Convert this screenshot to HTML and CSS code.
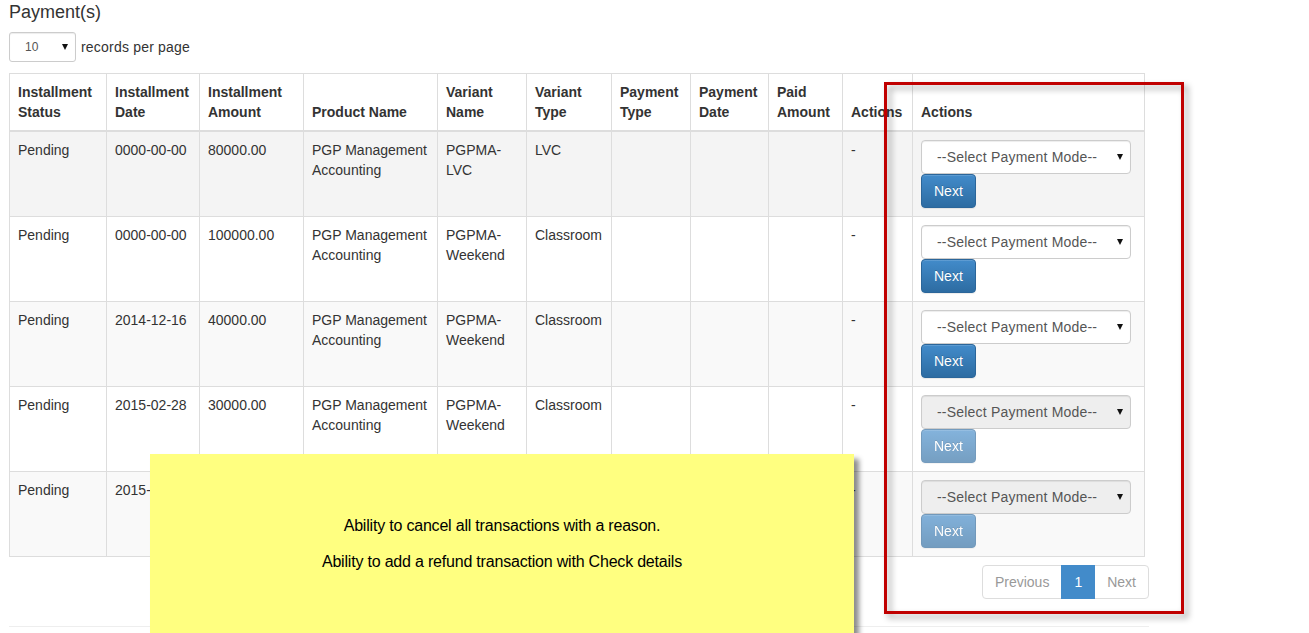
FILE: index.html
```html
<!DOCTYPE html>
<html>
<head>
<meta charset="utf-8">
<title>Payment(s)</title>
<link rel="stylesheet" href="styles.css">
</head>
<body>
<div class="page">
  <h4 class="title">Payment(s)</h4>
  <div class="length">
    <span class="sel-sm"><select><option>10</option></select></span>
    <span>records per page</span>
  </div>
  <table class="grid">
    <colgroup>
      <col class="c1"><col class="c2"><col class="c3"><col class="c4"><col class="c5"><col class="c6"><col class="c7"><col class="c8"><col class="c9"><col class="c10"><col class="c11">
    </colgroup>
    <thead>
      <tr>
        <th>Installment Status</th>
        <th>Installment Date</th>
        <th>Installment Amount</th>
        <th>Product Name</th>
        <th>Variant Name</th>
        <th>Variant Type</th>
        <th>Payment Type</th>
        <th>Payment Date</th>
        <th>Paid Amount</th>
        <th>Actions</th>
        <th>Actions</th>
      </tr>
    </thead>
    <tbody>
      <tr class="hover">
        <td>Pending</td><td>0000-00-00</td><td>80000.00</td><td>PGP Management Accounting</td><td>PGPMA-LVC</td><td>LVC</td><td></td><td></td><td></td><td>-</td>
        <td><span class="mode"><select><option>--Select Payment Mode--</option></select></span><button class="btn-next">Next</button></td>
      </tr>
      <tr>
        <td>Pending</td><td>0000-00-00</td><td>100000.00</td><td>PGP Management Accounting</td><td>PGPMA-Weekend</td><td>Classroom</td><td></td><td></td><td></td><td>-</td>
        <td><span class="mode"><select><option>--Select Payment Mode--</option></select></span><button class="btn-next">Next</button></td>
      </tr>
      <tr class="odd">
        <td>Pending</td><td>2014-12-16</td><td>40000.00</td><td>PGP Management Accounting</td><td>PGPMA-Weekend</td><td>Classroom</td><td></td><td></td><td></td><td>-</td>
        <td><span class="mode"><select><option>--Select Payment Mode--</option></select></span><button class="btn-next">Next</button></td>
      </tr>
      <tr>
        <td>Pending</td><td>2015-02-28</td><td>30000.00</td><td>PGP Management Accounting</td><td>PGPMA-Weekend</td><td>Classroom</td><td></td><td></td><td></td><td>-</td>
        <td><span class="mode"><select disabled><option>--Select Payment Mode--</option></select></span><button class="btn-next" disabled>Next</button></td>
      </tr>
      <tr class="odd">
        <td>Pending</td><td>2015-03-31</td><td>20000.00</td><td>PGP Management Accounting</td><td>PGPMA-Weekend</td><td>Classroom</td><td></td><td></td><td></td><td>-</td>
        <td><span class="mode"><select disabled><option>--Select Payment Mode--</option></select></span><button class="btn-next" disabled>Next</button></td>
      </tr>
    </tbody>
  </table>
  <div class="pager-row">
    <ul class="pagination">
      <li class="disabled"><a>Previous</a></li>
      <li class="active"><a>1</a></li>
      <li class="disabled"><a>Next</a></li>
    </ul>
  </div>
  <hr class="rule">
</div>

<div class="note">
  <p>Ability to cancel all transactions with a reason.</p>
  <p>Ability to add a refund transaction with Check details</p>
</div>
<div class="callout"></div>
</body>
</html>
```

FILE: styles.css
```css
* { box-sizing: border-box; }

body {
  margin: 0;
  background: #fff;
  color: #333;
  font-family: "Liberation Sans", Arial, sans-serif;
  font-size: 14px;
  line-height: 20px;
}

.page {
  padding: 2px 0 0 9px;
  width: 1150px;
}

.title {
  margin: 0;
  font-size: 18px;
  line-height: 20px;
  font-weight: normal;
}

.length {
  display: flex;
  align-items: center;
  gap: 5px;
  margin-top: 10px;
  letter-spacing: 0.2px;
}

.sel-sm {
  position: relative;
  display: inline-block;
  height: 30px;
}

.sel-sm select {
  appearance: none;
  -webkit-appearance: none;
  width: 67px;
  height: 30px;
  padding: 0 0 0 15px;
  border: 1px solid #ccc;
  border-radius: 3px;
  background: #fff;
  color: #555;
  font-family: inherit;
  font-size: 12px;
  box-shadow: inset 0 1px 1px rgba(0, 0, 0, .075);
}

.sel-sm::after,
.mode::after {
  content: "";
  position: absolute;
  width: 0;
  height: 0;
  border-left: 3.5px solid transparent;
  border-right: 3.5px solid transparent;
  border-top: 6px solid #111;
  pointer-events: none;
}

.sel-sm::after { right: 8px; top: 12px; }

.grid {
  margin-top: 11px;
  border-collapse: collapse;
  table-layout: fixed;
  width: 1135px;
}

.c1 { width: 97px; }
.c2 { width: 93px; }
.c3 { width: 104px; }
.c4 { width: 134px; }
.c5 { width: 89px; }
.c6 { width: 85px; }
.c7 { width: 79px; }
.c8 { width: 78px; }
.c9 { width: 74px; }
.c10 { width: 70px; }
.c11 { width: 232px; }

.grid th,
.grid td {
  border: 1px solid #ddd;
  padding: 8px;
  text-align: left;
  vertical-align: top;
  line-height: 20px;
}

.grid th {
  vertical-align: bottom;
  border-bottom-width: 2px;
  font-weight: bold;
  white-space: normal;
}

.grid tr.hover td { background: #f4f4f4; }
.grid tr.odd td { background: #f9f9f9; }

.mode {
  position: relative;
  display: block;
  width: 210px;
  height: 34px;
}

.mode::after { right: 8px; top: 14px; }

.mode select {
  appearance: none;
  -webkit-appearance: none;
  display: block;
  width: 210px;
  height: 34px;
  padding: 0 0 0 15px;
  border: 1px solid #ccc;
  border-radius: 4px;
  background: #fff;
  color: #555;
  font-family: inherit;
  font-size: 14px;
  letter-spacing: 0.2px;
  box-shadow: inset 0 1px 1px rgba(0, 0, 0, .075);
  opacity: 1;
}

.mode select:disabled {
  background: #eee;
  color: #555;
}

.btn-next {
  display: block;
  height: 34px;
  padding: 6px 12px;
  border: 1px solid #2b669a;
  border-radius: 4px;
  background: linear-gradient(to bottom, #428bca 0, #2d6ca2 100%);
  color: #fff;
  font-family: inherit;
  font-size: 14px;
  line-height: 20px;
  text-shadow: 0 -1px 0 rgba(0, 0, 0, .2);
  box-shadow: inset 0 1px 0 rgba(255, 255, 255, .15), 0 1px 1px rgba(0, 0, 0, .075);
}

.btn-next:disabled { opacity: .65; }

.pager-row {
  display: flex;
  justify-content: flex-end;
  margin-top: 8px;
  width: 1140px;
}

.pagination {
  display: flex;
  margin: 0;
  padding: 0;
  list-style: none;
}

.pagination a {
  display: block;
  padding: 6px 12px;
  margin-left: -1px;
  border: 1px solid #ddd;
  background: #fff;
  color: #428bca;
  line-height: 20px;
}

.pagination li:first-child a {
  margin-left: 0;
  border-radius: 4px 0 0 4px;
}

.pagination li:last-child a { border-radius: 0 4px 4px 0; }

.pagination .disabled a { color: #999; }

.pagination .active a {
  background: #428bca;
  border-color: #428bca;
  color: #fff;
  position: relative;
}

.rule {
  margin: 27px 0 0;
  width: 1140px;
  border: 0;
  border-top: 1px solid #eee;
}

.note {
  position: absolute;
  left: 150px;
  top: 454px;
  width: 704px;
  height: 200px;
  padding-top: 62px;
  background: #ffff80;
  box-shadow: 5px 5px 5px rgba(0, 0, 0, .45);
  color: #000;
  text-align: center;
  font-size: 16px;
  line-height: 20px;
  letter-spacing: -0.2px;
}

.note p { margin: 0 0 16px; }

.callout {
  position: absolute;
  left: 884px;
  top: 82px;
  width: 300px;
  height: 532px;
  border: 3px solid #c00000;
  filter: drop-shadow(4px 4px 3px rgba(0, 0, 0, .35));
}
```
